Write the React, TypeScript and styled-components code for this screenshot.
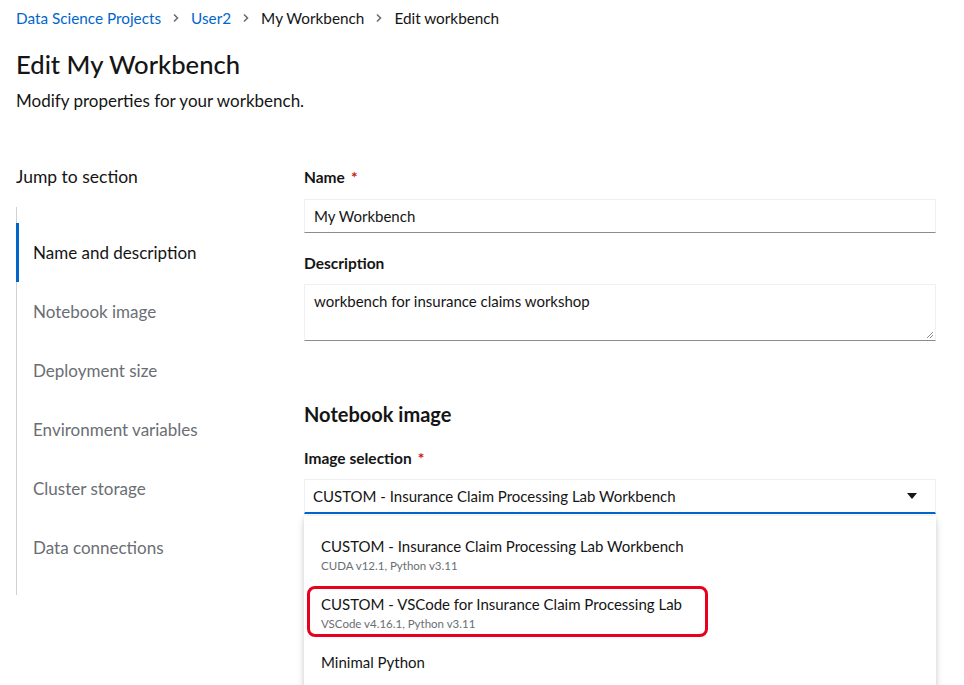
import React from "react";
import styled, { createGlobalStyle } from "styled-components";

const Global = createGlobalStyle`
  html, body { margin: 0; padding: 0; background: #fff; }
  body { font-family: "Lato", "Liberation Sans", sans-serif; color: #151515; }
  * { box-sizing: border-box; }
`;

const Page = styled.div`
  width: 964px;
  height: 685px;
  overflow: hidden;
  padding: 8px 28px 0 16px;
`;

const Breadcrumb = styled.nav`
  display: flex;
  align-items: center;
  height: 20px;
  font-size: 15.3px;
  gap: 11px;
`;

const Crumb = styled.span<{ $link?: boolean }>`
  color: ${(p) => (p.$link ? "#0066cc" : "#151515")};
`;

const Sep = styled.span`
  display: flex;
  align-items: center;
`;

const Title = styled.h1`
  margin: 20px 0 0;
  font-size: 25.6px;
  line-height: 32px;
  font-weight: 500;
`;

const Subtitle = styled.p`
  margin: 11px 0 0;
  font-size: 17px;
  line-height: 20px;
`;

const Main = styled.div`
  display: grid;
  grid-template-columns: 288px 1fr;
  margin-top: 56px;
`;

const JumpCol = styled.div`
  display: flex;
  flex-direction: column;
`;

const JumpTitle = styled.div`
  font-size: 17.5px;
  line-height: 20px;
`;

const NavList = styled.ul`
  list-style: none;
  margin: 20px 0 0;
  padding: 16px 0 18px;
  border-left: 1px solid #d2d2d2;
  width: 260px;
`;

const NavItem = styled.li<{ $active?: boolean }>`
  height: 59px;
  display: flex;
  align-items: center;
  padding-left: 14px;
  margin-left: -1px;
  font-size: 17px;
  color: ${(p) => (p.$active ? "#151515" : "#6a6e73")};
  border-left: 3px solid ${(p) => (p.$active ? "#0066cc" : "transparent")};
`;

const FormCol = styled.div`
  display: flex;
  flex-direction: column;
`;

const Label = styled.div<{ $top?: number }>`
  font-size: 15.5px;
  font-weight: 700;
  line-height: 20px;
  margin-top: ${(p) => p.$top ?? 0}px;
`;

const Req = styled.span`
  color: #c9190b;
  margin-left: 6px;
`;

const TextInput = styled.div`
  margin-top: 12px;
  height: 34px;
  border: 1px solid #f0f0f0;
  border-bottom-color: #8a8d90;
  padding: 0 9px;
  display: flex;
  align-items: center;
  font-size: 15px;
`;

const TextArea = styled.div`
  position: relative;
  margin-top: 11px;
  height: 57px;
  border: 1px solid #f0f0f0;
  border-bottom-color: #8a8d90;
  padding: 6px 9px;
  font-size: 15px;
  line-height: 20px;
`;

const Resize = styled.svg`
  position: absolute;
  right: 1px;
  bottom: 1px;
`;

const SectionTitle = styled.h2`
  margin: 62px 0 0;
  font-size: 20px;
  line-height: 22px;
  font-weight: 700;
`;

const SelectBox = styled.div`
  margin-top: 11px;
  height: 35px;
  border: 1px solid #f0f0f0;
  border-bottom: 2px solid #0066cc;
  padding: 0 18px 0 8px;
  display: flex;
  align-items: center;
  justify-content: space-between;
  font-size: 15px;
`;

const Menu = styled.div`
  margin-top: 2px;
  height: 200px;
  background: #fff;
  box-shadow: 0 4px 8px rgba(3, 3, 3, 0.16), 0 0 4px rgba(3, 3, 3, 0.08);
  padding-top: 14px;
`;

const Option = styled.div`
  position: relative;
  padding: 6px 17px;
  height: 58px;
  display: flex;
  flex-direction: column;
`;

const OptTitle = styled.div`
  font-size: 15px;
  line-height: 20px;
  color: #151515;
`;

const OptDesc = styled.div`
  font-size: 11.5px;
  line-height: 20px;
  color: #6a6e73;
`;

const Highlight = styled.div`
  position: absolute;
  left: 3px;
  top: -2px;
  width: 401px;
  height: 51px;
  border: 3px solid #e8001c;
  border-radius: 8px;
  pointer-events: none;
`;

const Chevron = () => (
  <svg width="8" height="10" viewBox="0 0 8 10">
    <path d="M2 1.5 L5.5 5 L2 8.5" fill="none" stroke="#6a6e73" strokeWidth="1.6" />
  </svg>
);

export default function App() {
  const nav = [
    "Name and description",
    "Notebook image",
    "Deployment size",
    "Environment variables",
    "Cluster storage",
    "Data connections",
  ];
  return (
    <Page>
      <Global />
      <Breadcrumb>
        <Crumb $link>Data Science Projects</Crumb>
        <Sep><Chevron /></Sep>
        <Crumb $link>User2</Crumb>
        <Sep><Chevron /></Sep>
        <Crumb>My Workbench</Crumb>
        <Sep><Chevron /></Sep>
        <Crumb>Edit workbench</Crumb>
      </Breadcrumb>
      <Title>Edit My Workbench</Title>
      <Subtitle>Modify properties for your workbench.</Subtitle>
      <Main>
        <JumpCol>
          <JumpTitle>Jump to section</JumpTitle>
          <NavList>
            {nav.map((n, i) => (
              <NavItem key={n} $active={i === 0}>{n}</NavItem>
            ))}
          </NavList>
        </JumpCol>
        <FormCol>
          <Label>Name<Req>*</Req></Label>
          <TextInput>My Workbench</TextInput>
          <Label $top={20}>Description</Label>
          <TextArea>
            workbench for insurance claims workshop
            <Resize width="8" height="8" viewBox="0 0 8 8">
              <path d="M7 1 L1 7 M7 4 L4 7" stroke="#8a8d90" strokeWidth="1" />
            </Resize>
          </TextArea>
          <SectionTitle>Notebook image</SectionTitle>
          <Label $top={23}>Image selection<Req>*</Req></Label>
          <SelectBox>
            <span>CUSTOM - Insurance Claim Processing Lab Workbench</span>
            <svg width="10" height="6" viewBox="0 0 10 6">
              <path d="M0 0 H10 L5 6 Z" fill="#151515" />
            </svg>
          </SelectBox>
          <Menu>
            <Option>
              <OptTitle>CUSTOM - Insurance Claim Processing Lab Workbench</OptTitle>
              <OptDesc>CUDA v12.1, Python v3.11</OptDesc>
            </Option>
            <Option>
              <Highlight />
              <OptTitle>CUSTOM - VSCode for Insurance Claim Processing Lab</OptTitle>
              <OptDesc>VSCode v4.16.1, Python v3.11</OptDesc>
            </Option>
            <Option>
              <OptTitle>Minimal Python</OptTitle>
            </Option>
          </Menu>
        </FormCol>
      </Main>
    </Page>
  );
}
